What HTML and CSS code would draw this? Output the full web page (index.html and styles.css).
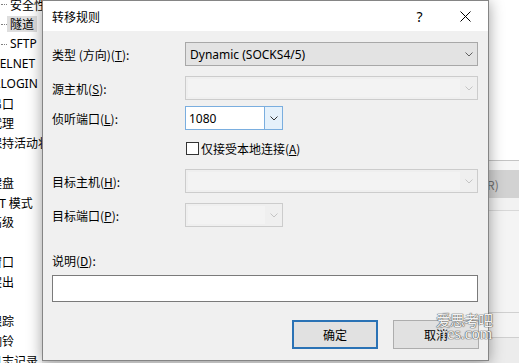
FILE: index.html
```html
<!DOCTYPE html>
<html lang="zh-CN">
<head>
<meta charset="utf-8">
<title>转移规则</title>
<link rel="stylesheet" href="styles.css">
</head>
<body>
<div class="app">
  <div class="tree">
    <div class="node sub"><span class="dots"></span><span class="txt">安全性</span></div>
    <div class="node sub"><span class="dots"></span><span class="txt sel">隧道</span></div>
    <div class="node sub"><span class="dots"></span><span class="txt lat">SFTP</span></div>
    <div class="node l2 lat">TELNET</div>
    <div class="node l2 lat">RLOGIN</div>
    <div class="node l2">串口</div>
    <div class="node l2">代理</div>
    <div class="node l2">保持活动状态</div>
    <div class="node l1">终端</div>
    <div class="node l2">键盘</div>
    <div class="node l2 vt">VT 模式</div>
    <div class="node l2">高级</div>
    <div class="node l1">外观</div>
    <div class="node l2">窗口</div>
    <div class="node l2">突出</div>
    <div class="node l1">高级</div>
    <div class="node l2">跟踪</div>
    <div class="node l2">响铃</div>
    <div class="node l2">日志记录</div>
  </div>
  <div class="content">
    <div class="c-top"></div>
    <div class="c-gap"></div>
    <div class="c-band"><span class="c-band-txt">恢复默认值(R)</span></div>
    <div class="c-gap2"></div>
    <div class="c-list"></div>
    <div class="c-row"></div>
    <div class="c-rest"></div>
  </div>
</div>

<div class="dialog">
  <div class="titlebar">
    <div class="title">转移规则</div>
    <div class="tb-btn help">?</div>
    <div class="tb-btn close">
      <svg width="11" height="11" viewBox="0 0 11 11"><path d="M0.5 0.5 L10.5 10.5 M10.5 0.5 L0.5 10.5" stroke="#000" stroke-width="1" fill="none"/></svg>
    </div>
  </div>
  <div class="dbody">
    <div class="row r1">
      <div class="label">类型 (方向)(<u>T</u>):</div>
      <div class="combo wide">
        <div class="val lat">Dynamic (SOCKS4/5)</div>
        <div class="arrow"><svg width="8" height="5" viewBox="0 0 8 5"><polyline points="0.5,0.5 4,4 7.5,0.5" fill="none" stroke="#606060" stroke-width="1"/></svg></div>
      </div>
    </div>
    <div class="row r2">
      <div class="label">源主机(<u>S</u>):</div>
      <div class="combo wide dis">
        <div class="val"></div>
        <div class="arrow"><svg width="8" height="5" viewBox="0 0 8 5"><polyline points="0.5,0.5 4,4 7.5,0.5" fill="none" stroke="#c4c4c4" stroke-width="1"/></svg></div>
      </div>
    </div>
    <div class="row r3">
      <div class="label">侦听端口(<u>L</u>):</div>
      <div class="combo narrow focus">
        <div class="val lat">1080</div>
        <div class="arrow"><svg width="8" height="5" viewBox="0 0 8 5"><polyline points="0.5,0.5 4,4 7.5,0.5" fill="none" stroke="#333" stroke-width="1"/></svg></div>
      </div>
    </div>
    <div class="row chkrow">
      <div class="check"></div>
      <div class="chklabel">仅接受本地连接(<u>A</u>)</div>
    </div>
    <div class="row r5">
      <div class="label">目标主机(<u>H</u>):</div>
      <div class="combo wide dis">
        <div class="val"></div>
        <div class="arrow"><svg width="8" height="5" viewBox="0 0 8 5"><polyline points="0.5,0.5 4,4 7.5,0.5" fill="none" stroke="#c4c4c4" stroke-width="1"/></svg></div>
      </div>
    </div>
    <div class="row r6">
      <div class="label">目标端口(<u>P</u>):</div>
      <div class="combo narrow dis">
        <div class="val"></div>
        <div class="arrow"><svg width="8" height="5" viewBox="0 0 8 5"><polyline points="0.5,0.5 4,4 7.5,0.5" fill="none" stroke="#c4c4c4" stroke-width="1"/></svg></div>
      </div>
    </div>
    <div class="desc-label">说明(<u>D</u>):</div>
    <div class="textbox"></div>
    <div class="buttons">
      <div class="btn primary">确定</div>
      <div class="btn">取消</div>
    </div>
  </div>
</div>

<div class="watermark">
  <div class="wm1">爱思考吧</div>
  <div class="wm2">res.com</div>
</div>
</body>
</html>
```

FILE: styles.css
```css
html, body {
  margin: 0;
  padding: 0;
}
body {
  width: 519px;
  height: 363px;
  overflow: hidden;
  position: relative;
  font-family: "Noto Sans CJK SC", "Noto Sans", sans-serif;
  font-size: 12px;
  color: #000;
  background: #fff;
}
u { text-decoration: underline; text-underline-offset: 1px; }
.lat { font-family: "Noto Sans", "Noto Sans CJK SC", sans-serif; }

.app {
  display: grid;
  grid-template-columns: 42px 1fr;
  width: 519px;
  height: 363px;
}

/* tree */
.tree {
  background: #fff;
  overflow: hidden;
}
.node {
  height: 19.8px;
  line-height: 19.8px;
  white-space: nowrap;
  display: flex;
  align-items: center;
}
.node:first-child { margin-top: -5.4px; }
.node.sub { padding-left: 1px; }
.dots {
  width: 6px;
  height: 0;
  border-top: 1px dotted #808080;
  flex: none;
}
.txt { padding: 0 3px; height: 16px; line-height: 16px; }
.txt.sel { background: #dedede; }
.node.l2 { margin-left: -10px; }
.node.l2.lat { margin-left: -7px; font-family: "Noto Sans", sans-serif; }
.node.l2.vt { margin-left: -8px; }
.node.l1 { margin-left: -40px; }

/* background content */
.content {
  display: flex;
  flex-direction: column;
  background: #f0f0f0;
}
.c-top { height: 160px; background: #fff; border-bottom: 1px solid #c4c4c4; }
.c-gap { height: 9px; background: #f6f6f6; }
.c-band {
  height: 28px;
  background: #d2d2d2;
  display: flex;
  align-items: center;
  padding-left: 381px;
  white-space: nowrap;
  color: #707070;
}
.c-gap2 { height: 12px; background: #f2f2f2; border-bottom: 1px solid #d8d8d8; }
.c-list { height: 101px; background: #f4f4f4; border-bottom: 1px solid #d0d0d0; }
.c-row { height: 24px; background: #f4f4f4; border-bottom: 1px solid #cfcfcf; }
.c-rest { flex: 1; background: #ececec; }

/* dialog */
.dialog {
  position: absolute;
  left: 42px;
  top: 0;
  width: 447px;
  height: 361px;
  box-sizing: border-box;
  border: 1px solid #858585;
  background: #f0f0f0;
  box-shadow: 0 2px 14px rgba(0, 0, 0, 0.38);
  display: flex;
  flex-direction: column;
}
.titlebar {
  height: 30px;
  background: #fff;
  display: flex;
  align-items: center;
  padding-left: 9px;
  flex: none;
}
.title { flex: 1; }
.tb-btn {
  width: 45px;
  height: 30px;
  display: flex;
  align-items: center;
  justify-content: center;
}
.help {
  font-family: "Noto Sans", sans-serif;
  font-size: 14px;
  padding-top: 1px;
  box-sizing: border-box;
}
.close { width: 46px; }

.dbody {
  flex: 1;
  padding: 11px 9px 0 9px;
  display: flex;
  flex-direction: column;
}
.row {
  display: flex;
  align-items: center;
  height: 24px;
  flex: none;
}
.r2 { margin-top: 10px; }
.r3 { margin-top: 6px; }
.chkrow { margin-top: 12px; height: 13px; padding-left: 134px; }
.r5 { margin-top: 14px; }
.r6 { margin-top: 10px; }
.label { width: 133px; flex: none; }

.combo {
  height: 24px;
  box-sizing: border-box;
  display: flex;
  align-items: stretch;
  border: 1px solid #a8a8a8;
  background: #e3e3e3;
}
.combo.wide { width: 293px; }
.combo.narrow { width: 98px; }
.combo .val {
  flex: 1;
  display: flex;
  align-items: center;
  padding-left: 4px;
  white-space: nowrap;
}
.combo .arrow {
  width: 17px;
  flex: none;
  display: flex;
  align-items: center;
  justify-content: center;
}
.combo.dis { border-color: #cccccc; background: #efefef; }
.combo.dis .val { margin: 2px 0 2px 2px; background: #f3f3f3; }
.combo.focus { border-color: #7aaedf; background: #fff; }
.combo.focus .val { padding-left: 3px; }
.combo.focus .arrow { border-left: 1px solid #7aaedf; background: #e5f1fb; }

.check {
  width: 13px;
  height: 13px;
  box-sizing: border-box;
  border: 1px solid #333;
  background: #fff;
  margin-right: 2px;
  flex: none;
}
.chklabel { white-space: nowrap; }

.desc-label { margin-top: 26px; height: 16px; line-height: 16px; }
.textbox {
  margin-top: 6px;
  width: 426px;
  height: 27px;
  box-sizing: border-box;
  border: 1px solid #7a7a7a;
  background: #fff;
}
.buttons {
  margin-top: 18px;
  display: flex;
  justify-content: flex-end;
  gap: 15px;
}
.btn {
  width: 86px;
  height: 29px;
  box-sizing: border-box;
  border: 1px solid #adadad;
  background: #e1e1e1;
  display: flex;
  align-items: center;
  justify-content: center;
}
.btn.primary { border: 2px solid #2a72b5; }

/* watermark overlay */
.watermark {
  position: absolute;
  left: 436px;
  top: 312px;
  color: #f2f2f2;
  text-shadow: 0 0 1px #555, 0 0 1px #555, 0 0 1px #555;
  line-height: 16px;
}
.wm1 { font-size: 15px; font-family: "Noto Sans CJK SC", sans-serif; letter-spacing: -1px; }
.wm2 { font-size: 16px; margin-left: 6px; margin-top: -2px; font-family: "Liberation Serif", serif; }
```
